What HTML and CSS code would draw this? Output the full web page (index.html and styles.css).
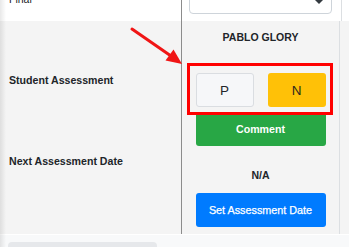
FILE: index.html
```html
<!DOCTYPE html>
<html>
<head>
<meta charset="utf-8">
<link rel="stylesheet" href="styles.css">
</head>
<body>
<div class="page">
  <div class="row row-top">
    <div class="cell label top-label"><span class="final">Final</span></div>
    <div class="cell main">
      <div class="select">
        <svg class="caret" width="10" height="6" viewBox="0 0 10 6"><path d="M1 0 L5 4 L9 0 Z" fill="#343a40"/></svg>
      </div>
    </div>
    <div class="cell extra"></div>
  </div>
  <div class="row row-body">
    <div class="cell label labels">
      <div class="lbl lbl-student">Student Assessment</div>
      <div class="lbl lbl-next">Next Assessment Date</div>
    </div>
    <div class="cell main content">
      <div class="name">PABLO GLORY</div>
      <div class="choices">
        <button class="btn btn-p">P</button>
        <button class="btn btn-n">N</button>
      </div>
      <button class="btn btn-comment">Comment</button>
      <div class="na">N/A</div>
      <button class="btn btn-date">Set Assessment Date</button>
    </div>
    <div class="cell extra"></div>
  </div>
  <div class="footer"><div class="tab"></div></div>
</div>
<div class="edge-shadow"></div>
<div class="red-box"></div>
<svg class="arrow" width="349" height="247" viewBox="0 0 349 247">
  <line x1="132" y1="29" x2="171" y2="56" stroke="#f01515" stroke-width="3" stroke-linecap="round"/>
  <polygon points="182,64 165.5,60.5 173.5,49.5" fill="#f01515"/>
</svg>
</body>
</html>
```

FILE: styles.css
```css
html, body {
  margin: 0;
  padding: 0;
}
body {
  width: 349px;
  height: 247px;
  overflow: hidden;
  background: #f8f9fa;
  font-family: "Liberation Sans", Arial, sans-serif;
  color: #212529;
  position: relative;
}
.page {
  margin-top: -20px;
  display: flex;
  flex-direction: column;
}
.row {
  display: flex;
}
.cell.label {
  width: 181px;
  flex: none;
}
.cell.main {
  width: 159px;
  flex: none;
  border-left: 1px solid #8c8c8c;
  border-right: 1px solid #dcdfe2;
}
.cell.extra {
  flex: 1;
}
.row-top {
  height: 41px;
  background: #ffffff;
}
.top-label {
  display: flex;
  align-items: center;
  padding-left: 9px;
  box-sizing: border-box;
}
.final {
  font-size: 10.5px;
  line-height: 14px;
  margin-top: -4px;
}
.select {
  position: relative;
  margin: 3px 0 0 7px;
  width: 143px;
  height: 31px;
  box-sizing: border-box;
  border: 1px solid #ced4da;
  border-radius: 4px;
  background: #fff;
}
.caret {
  position: absolute;
  right: 7px;
  top: 16px;
}
.row-body {
  height: 213px;
  background: #f4f4f4;
}
.labels {
  display: flex;
  flex-direction: column;
  padding: 52px 0 0 9px;
  box-sizing: border-box;
}
.lbl {
  font-size: 10.6px;
  font-weight: bold;
  line-height: 14px;
  white-space: nowrap;
}
.lbl-next {
  margin-top: 67px;
}
.content {
  display: flex;
  flex-direction: column;
  align-items: center;
  padding-top: 9px;
  box-sizing: border-box;
}
.name, .na {
  font-size: 10.5px;
  font-weight: bold;
  line-height: 14px;
}
.choices {
  display: flex;
  gap: 14px;
  margin-top: 29px;
}
.btn {
  font-family: "Liberation Sans", Arial, sans-serif;
  border: 0;
  padding: 0;
  margin: 0;
  border-radius: 3px;
  box-sizing: border-box;
}
.btn-p, .btn-n {
  width: 58px;
  height: 34px;
  font-size: 13.5px;
  color: #212529;
}
.btn-p {
  background: #f6f7f9;
  border: 1px solid #dadde1;
}
.btn-n {
  background: #ffc107;
  color: #2d2a1e;
}
.btn-comment, .btn-date {
  width: 130px;
  height: 34px;
  color: #fff;
}
.btn-comment {
  margin-top: 5px;
  background: #28a745;
  font-size: 10.6px;
  font-weight: bold;
}
.na {
  margin-top: 22px;
}
.btn-date {
  margin-top: 11px;
  background: #007bff;
  font-size: 10.8px;
  -webkit-text-stroke: 0.25px #fff;
}
.footer {
  height: 13px;
  background: #f8f9fa;
  border-top: 1px solid #ffffff;
  box-sizing: border-box;
  padding: 7px 0 0 8px;
}
.tab {
  width: 149px;
  height: 5px;
  background: #e6e8eb;
  border-radius: 4px 4px 0 0;
}
.edge-shadow {
  position: absolute;
  left: 0;
  top: 0;
  width: 6px;
  height: 247px;
  background: linear-gradient(to right, rgba(0,0,0,0.09), rgba(0,0,0,0));
}
.red-box {
  position: absolute;
  left: 187px;
  top: 63px;
  width: 146px;
  height: 52px;
  border: 3px solid #ff0000;
  box-sizing: border-box;
}
.arrow {
  position: absolute;
  left: 0;
  top: 0;
}
```
